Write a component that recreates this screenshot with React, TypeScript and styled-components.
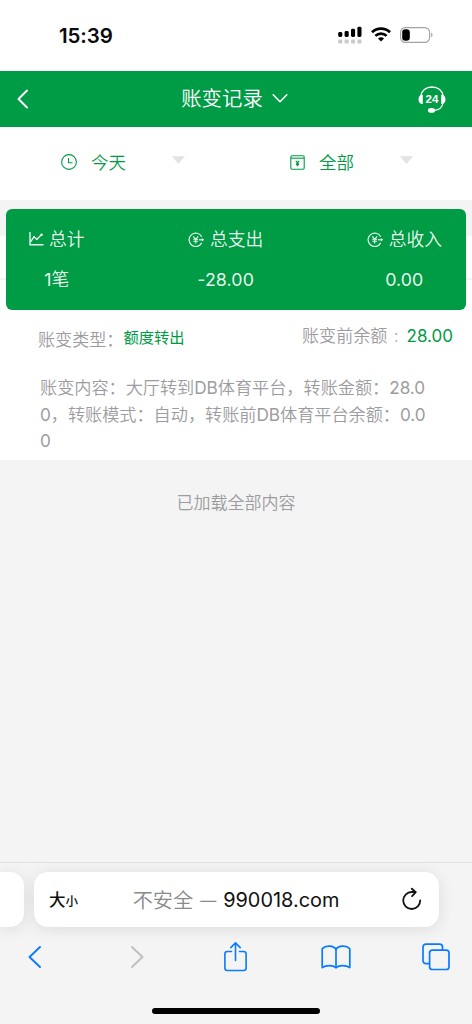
import React from "react";
import styled, { createGlobalStyle } from "styled-components";

const GREEN = "#009b45";
const BLUE = "#0a7aff";

const GlobalStyle = createGlobalStyle`
  * { box-sizing: border-box; }
  body {
    margin: 0;
    background: #f4f4f4;
    font-family: Inter, "Noto Sans CJK SC", sans-serif;
  }
  svg { display: block; flex: none; overflow: visible; }
`;

const Screen = styled.div`
  width: 472px;
  height: 1024px;
  display: flex;
  flex-direction: column;
  overflow: hidden;
  background: #f4f4f4;
`;

const StatusBar = styled.div`
  height: 71px;
  flex: none;
  background: #fff;
  display: flex;
  align-items: center;
  justify-content: space-between;
  padding: 0 39px 0 59px;
`;

const Clock = styled.div`
  font-size: 20.5px;
  font-weight: 600;
  letter-spacing: -0.1px;
  line-height: 24px;
  color: #0b0b0b;
`;

const StatusIcons = styled.div`
  display: flex;
  align-items: center;
  gap: 9px;
  margin-top: -2px;
`;

const Header = styled.header`
  height: 56px;
  flex: none;
  background: ${GREEN};
  display: grid;
  grid-template-columns: 1fr auto 1fr;
  align-items: center;
  padding: 0 26px 0 17px;
  color: #fff;
`;

const Title = styled.div`
  display: flex;
  align-items: center;
  gap: 9px;
  margin-left: 6px;
  font-size: 20.4px;
  line-height: 28px;
  font-weight: 350;
`;

const HeaderEnd = styled.div`
  justify-self: end;
`;

const Filters = styled.div`
  height: 73px;
  flex: none;
  background: #fff;
  display: flex;
  padding: 0 59px 3px 61px;
  justify-content: space-between;
  align-items: center;
`;

const Filter = styled.div`
  display: flex;
  align-items: center;
  gap: 14px;
  color: ${GREEN};
  font-size: 17.5px;
  line-height: 26px;
  font-weight: 350;
`;

const FilterText = styled.span`
  padding-top: 2px;
`;

const Caret = styled.svg`
  margin: -4px 0 0 32px;
`;

const SummaryBand = styled.div`
  height: 36px;
  flex: none;
  padding: 9px 6px 0;
  position: relative;
  z-index: 1;
`;

const SummaryCard = styled.div`
  height: 101px;
  border-radius: 6px;
  background: ${GREEN};
  color: rgba(255, 255, 255, 0.93);
  font-weight: 350;
  display: flex;
  justify-content: space-between;
  padding: 18px 24px 0 23px;
`;

const Stat = styled.div`
  display: flex;
  flex-direction: column;
  align-items: center;
  gap: 16px;
`;

const StatLabel = styled.div`
  display: flex;
  align-items: center;
  gap: 5px;
  font-size: 17.8px;
  line-height: 24px;
`;

const StatText = styled.span`
  padding-top: 1px;
`;

const StatValue = styled.div`
  font-size: 17.8px;
  line-height: 24px;
  letter-spacing: 0.1px;
`;

const Num = styled.span`
  font-weight: 400;
`;

const Record = styled.section`
  height: 224px;
  flex: none;
  background: #fff;
`;

const RecordDate = styled.div`
  height: 44px;
  border-bottom: 2px solid #f4f4f4;
`;

const RecordMeta = styled.div`
  display: flex;
  justify-content: space-between;
  align-items: flex-start;
  padding: 44px 19px 0 38px;
  height: 95px;
  color: #9c9ca0;
  font-size: 17.1px;
  line-height: 24px;
  font-weight: 350;
`;

const MetaPair = styled.div<{ $drop?: number; $gap?: number }>`
  display: flex;
  align-items: center;
  padding-top: ${(p) => p.$drop ?? 0}px;
  gap: ${(p) => p.$gap ?? 0}px;
`;

const MetaLabel = styled.span`
  word-spacing: 1.5px;
`;

const MetaValue = styled.span<{ $size: number; $lift?: number }>`
  color: ${GREEN};
  font-size: ${(p) => p.$size}px;
  font-weight: 400;
  margin-top: ${(p) => -(p.$lift ?? 0)}px;
`;

const RecordBody = styled.div`
  padding: 0 0 0 40px;
  color: #9c9ca0;
  font-size: 17.2px;
  line-height: 26.6px;
  font-weight: 350;
  white-space: nowrap;
`;

const BodyLine = styled.div`
  letter-spacing: -0.05px;
`;

const EndNote = styled.div`
  padding-top: 31px;
  text-align: center;
  color: #9c9ca0;
  font-size: 17px;
  line-height: 24px;
  font-weight: 350;
  flex: 1;
`;

const Browser = styled.footer`
  height: 162px;
  flex: none;
  border-top: 1px solid #dfdfdf;
  background: #f4f4f4;
  display: flex;
  flex-direction: column;
  overflow: hidden;
`;

const TabStrip = styled.div`
  display: flex;
  gap: 10px;
  padding-top: 9px;
`;

const TabCard = styled.div<{ $peek?: boolean }>`
  width: ${(p) => (p.$peek ? 24 : 405)}px;
  height: 55px;
  background: #fff;
  border-radius: ${(p) => (p.$peek ? "0 14px 14px 0" : "14px")};
  box-shadow: 0 2px 16px rgba(0, 0, 0, 0.1);
  display: flex;
  align-items: center;
  justify-content: space-between;
  padding: ${(p) => (p.$peek ? "0" : "0 17px 0 15px")};
`;

const TextSize = styled.div`
  display: flex;
  align-items: baseline;
  font-weight: 500;
  font-size: 16.5px;
  line-height: 24px;
  padding-top: 2px;
  color: #111;
`;

const SmallGlyph = styled.span`
  font-size: 12.5px;
`;

const Address = styled.div`
  display: flex;
  align-items: center;
  gap: 7px;
  margin-left: -8px;
  font-size: 19.9px;
  line-height: 28px;
  color: #111;
`;

const Insecure = styled.span`
  color: #8a8a8d;
  font-size: 20.2px;
  font-weight: 350;
  padding-top: 2px;
`;

const Dash = styled.span`
  color: #8a8a8d;
  font-size: 16px;
`;

const Toolbar = styled.nav`
  display: flex;
  align-items: center;
  justify-content: space-between;
  height: 60px;
  padding: 0 21px 0 20px;
`;

const ToolButton = styled.div<{ $indent?: number }>`
  width: 30px;
  display: flex;
  justify-content: center;
  padding-left: ${(p) => p.$indent ?? 0}px;
`;

const HomeIndicator = styled.div`
  width: 168px;
  height: 6px;
  border-radius: 3px;
  background: #000;
  margin: 21px auto 0;
`;

const Signal = () => (
  <svg width="24" height="18" viewBox="0 0 24 18">
    {[
      [0, 6],
      [6.4, 5],
      [12.8, 2.8],
      [19.2, 0.8],
    ].map(([x, y]) => (
      <g key={x}>
        <rect x={x + 0.2} y={y} width="4.1" height={11 - y} rx="1.4" fill="#000" />
        <rect x={x + 0.2} y="13.6" width="4.1" height="3.8" rx="1.2" fill="#c9c9c9" />
      </g>
    ))}
  </svg>
);

const Wifi = () => (
  <svg width="20" height="15" viewBox="0 0 20 15" fill="none" stroke="#000" strokeWidth="2.7">
    <path d="M1 5.2a13 13 0 0 1 18 0" />
    <path d="M4.4 8.9a8 8 0 0 1 11.2 0" />
    <path d="M10 14.6 6.9 11.6a4.5 4.5 0 0 1 6.2 0z" fill="#000" stroke="none" />
  </svg>
);

const Battery = () => (
  <svg width="33" height="16" viewBox="0 0 33 16">
    <rect x="0.6" y="0.6" width="29" height="14.8" rx="4.8" fill="none" stroke="#a3a3a3" strokeWidth="1.1" />
    <rect x="2.2" y="2.2" width="7.6" height="11.6" rx="3.2" fill="#000" />
    <path d="M31.2 5.6c1.8.8 1.8 4 0 4.8z" fill="#a3a3a3" />
  </svg>
);

const BackArrow = () => (
  <svg width="12" height="20" viewBox="0 0 12 20" fill="none" stroke="#fff" strokeWidth="2" strokeLinecap="round" strokeLinejoin="round">
    <path d="M10 1.5 1.5 10l8.5 8.5" />
  </svg>
);

const ChevronDown = () => (
  <svg width="16" height="10" viewBox="0 0 16 10" fill="none" stroke="#fff" strokeWidth="1.6" strokeLinecap="round" strokeLinejoin="round">
    <path d="M1.2.8 8 7.8l6.8-7" />
  </svg>
);

const Support = () => (
  <svg width="28" height="27" viewBox="0 0 28 27" fill="none" stroke="#fff">
    <path d="M2.7 10.2C3.4 4.500 8 1 14 1s10.600 3.500 11.300 9.200" strokeWidth="1.4" />
    <path d="M25 17c-.8 4.500-4.500 7-9 7.300" strokeWidth="1.3" />
    <path d="M4.800 8.800v9.200C2 18 .5 16.200.5 13.400S2 8.800 4.800 8.800zM23.200 8.800v9.200c2.800 0 4.300-1.800 4.300-4.600s-1.500-4.600-4.300-4.600z" fill="#fff" stroke="none" />
    <ellipse cx="13.500" cy="24.400" rx="3.600" ry="2.300" fill="#fff" stroke="none" />
    <text x="14" y="16.600" fill="#fff" stroke="none" textAnchor="middle" fontFamily="'Liberation Sans', sans-serif" fontSize="11.5" fontWeight="700">
      24
    </text>
  </svg>
);

const ClockIcon = () => (
  <svg width="16" height="16" viewBox="0 0 16 16" fill="none" stroke={GREEN} strokeWidth="1.1">
    <circle cx="8" cy="8" r="7.4" />
    <path d="M7.500 4v4.700h4" />
  </svg>
);

const VoucherIcon = () => (
  <svg width="15" height="15" viewBox="0 0 15 15" fill="none" stroke={GREEN} strokeWidth="1.1">
    <rect x="0.8" y="0.8" width="13.4" height="13.4" rx="1.2" />
    <path d="M1 3.200h13" />
    <path d="m5.800 5.800 1.700 1.900 1.700-1.900M7.500 7.700v3.600M6 8.200h3M6 9.600h3" />
  </svg>
);

const CaretIcon = () => (
  <Caret width="13" height="8" viewBox="0 0 13 8">
    <path d="M.6.6h11.800L6.500 7.500z" fill="#e3e3e3" stroke="#e3e3e3" strokeWidth="0.8" strokeLinejoin="round" />
  </Caret>
);

const TrendIcon = () => (
  <svg width="15" height="14" viewBox="0 0 15 14" fill="none" stroke="#e9f6ee" strokeWidth="1.4">
    <path d="M1-1v12.700h13.600" />
    <path d="M1.500 8.800 5 3.800l2.800 2.600 4.600-4.600" />
    <circle cx="5" cy="4.200" r="0.9" fill="#e9f6ee" stroke="none" />
    <circle cx="7.900" cy="6" r="0.9" fill="#e9f6ee" stroke="none" />
    <circle cx="12.600" cy="1.700" r="1.300" fill="#e9f6ee" stroke="none" />
  </svg>
);

const YuanIcon = () => (
  <svg width="17" height="16" viewBox="0 0 17 16" fill="none" stroke="#e9f6ee" strokeWidth="1.2">
    <path d="M13.700 4.700A6.700 6.700 0 1 0 13.700 10.900" />
    <path d="M11 7.800h4" />
    <path d="m13.800 6 2.400 1.800-2.400 1.800z" fill="#e9f6ee" stroke="none" />
    <path d="m5.300 4.400 2.400 3 2.400-3M7.700 7.400v4M5.300 7.300h4.800M5.300 9.200h4.800" strokeWidth="1.1" />
  </svg>
);

const Reload = () => (
  <svg width="20" height="23" viewBox="0 0 20 23" fill="none" stroke="#111" strokeWidth="1.8" strokeLinecap="round" strokeLinejoin="round">
    <path d="M18.200 12.300A8.500 8.500 0 1 1 9.700 4h3.500" />
    <path d="M9.800.7 13.800 4.200l-3.700 3.900" />
  </svg>
);

const NavChevron = ({ forward }: { forward?: boolean }) => (
  <svg width="14" height="22" viewBox="0 0 14 22" fill="none" stroke={forward ? "#bfbfc1" : BLUE} strokeWidth="1.9" strokeLinecap="round" strokeLinejoin="round">
    <path d={forward ? "M2 1l10.500 10L2 21" : "M12 1 1.500 11 12 21"} />
  </svg>
);

const Share = () => (
  <svg width="23" height="30" viewBox="0 0 23 30" fill="none" stroke={BLUE} strokeWidth="1.6" strokeLinecap="round" strokeLinejoin="round">
    <path d="M7.500 9.500H3.300A2.400 2.400 0 0 0 .9 11.900v14.200a2.400 2.400 0 0 0 2.400 2.400h16.400a2.400 2.400 0 0 0 2.400-2.400V11.900a2.400 2.400 0 0 0-2.400-2.400h-4.200" />
    <path d="M11.500 18.500V1M6.800 5.600 11.500.9l4.700 4.700" />
  </svg>
);

const Book = () => (
  <svg width="30" height="24" viewBox="0 0 30 24" fill="none" stroke={BLUE} strokeWidth="1.7" strokeLinecap="round" strokeLinejoin="round">
    <path d="M15 4.200C12.500.6 5 0 1.200 3.600v19c3.600-2.700 10.800-2.700 13.800 0 3-2.700 10.200-2.700 13.800 0v-19C25 0 17.500.6 15 4.200z" />
    <path d="M15 4.200v18.400" />
  </svg>
);

const Tabs = () => (
  <svg width="28" height="28" viewBox="0 0 28 28" fill="none" stroke={BLUE} strokeWidth="1.7" strokeLinejoin="round">
    <rect x="7.6" y="7.1" width="19.4" height="19.4" rx="2.8" />
    <path d="M7.200 20.700H3.900A2.900 2.900 0 0 1 1 17.800V4a2.900 2.900 0 0 1 2.900-2.900h13.700A2.900 2.900 0 0 1 20.500 4v2.800" />
  </svg>
);

export default function App() {
  return (
    <Screen>
      <GlobalStyle />
      <StatusBar>
        <Clock>15:39</Clock>
        <StatusIcons>
          <Signal />
          <Wifi />
          <Battery />
        </StatusIcons>
      </StatusBar>
      <Header>
        <BackArrow />
        <Title>
          账变记录
          <ChevronDown />
        </Title>
        <HeaderEnd>
          <Support />
        </HeaderEnd>
      </Header>
      <Filters>
        <Filter>
          <ClockIcon />
          <FilterText>今天</FilterText>
          <CaretIcon />
        </Filter>
        <Filter>
          <VoucherIcon />
          <FilterText>全部</FilterText>
          <CaretIcon />
        </Filter>
      </Filters>
      <SummaryBand>
        <SummaryCard>
          <Stat>
            <StatLabel>
              <TrendIcon />
              <StatText>总计</StatText>
            </StatLabel>
            <StatValue><Num>1</Num>笔</StatValue>
          </Stat>
          <Stat>
            <StatLabel>
              <YuanIcon />
              <StatText>总支出</StatText>
            </StatLabel>
            <StatValue><Num>-28.00</Num></StatValue>
          </Stat>
          <Stat>
            <StatLabel>
              <YuanIcon />
              <StatText>总收入</StatText>
            </StatLabel>
            <StatValue><Num>0.00</Num></StatValue>
          </Stat>
        </SummaryCard>
      </SummaryBand>
      <Record>
        <RecordDate />
        <RecordMeta>
          <MetaPair $drop={4}>
            账变类型：
            <MetaValue $size={15.3} $lift={4}>额度转出</MetaValue>
          </MetaPair>
          <MetaPair $gap={8}>
            <MetaLabel>账变前余额 :</MetaLabel>
            <MetaValue $size={17}>28.00</MetaValue>
          </MetaPair>
        </RecordMeta>
        <RecordBody>
          <BodyLine>账变内容：大厅转到<Num>DB</Num>体育平台，转账金额：<Num>28.0</Num></BodyLine>
          <BodyLine><Num>0</Num>，转账模式：自动，转账前<Num>DB</Num>体育平台余额：<Num>0.0</Num></BodyLine>
          <BodyLine><Num>0</Num></BodyLine>
        </RecordBody>
      </Record>
      <EndNote>已加载全部内容</EndNote>
      <Browser>
        <TabStrip>
          <TabCard $peek />
          <TabCard>
            <TextSize>
              大<SmallGlyph>小</SmallGlyph>
            </TextSize>
            <Address>
              <Insecure>不安全</Insecure>
              <Dash>—</Dash>
              <span>990018.com</span>
            </Address>
            <Reload />
          </TabCard>
        </TabStrip>
        <Toolbar>
          <ToolButton><NavChevron /></ToolButton>
          <ToolButton $indent={4}><NavChevron forward /></ToolButton>
          <ToolButton><Share /></ToolButton>
          <ToolButton><Book /></ToolButton>
          <ToolButton><Tabs /></ToolButton>
        </Toolbar>
        <HomeIndicator />
      </Browser>
    </Screen>
  );
}
